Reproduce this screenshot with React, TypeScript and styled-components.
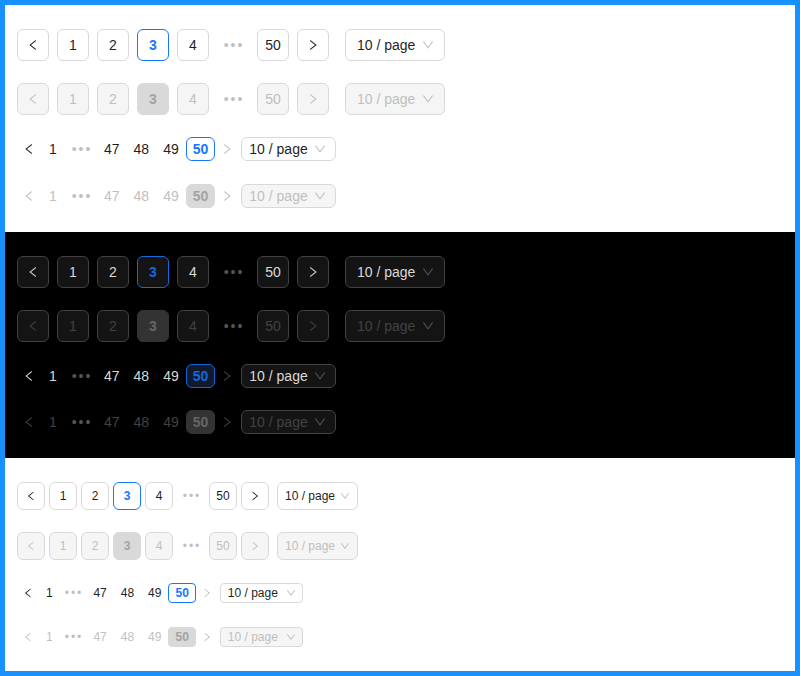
import React from "react";
import styled, { createGlobalStyle } from "styled-components";

type Mode = "light" | "dark";
type SizeKey = "lg" | "sm" | "miniLg" | "miniSm";

interface SizeSpec {
    h: number;
    minW: number;
    gap: number;
    font: number;
    icon: number;
    navW: number;
    ellW: number;
    selW: number;
    selGap: number;
    selPadL: number;
    selPadR: number;
    arrow: number;
    radius: number;
    mini: boolean;
}

const sizes: Record<SizeKey, SizeSpec> = {
    lg: { h: 32, minW: 32, gap: 8, font: 14, icon: 12, navW: 32, ellW: 32, selW: 100, selGap: 16, selPadL: 11, selPadR: 10, arrow: 12, radius: 6, mini: false },
    sm: { h: 28, minW: 28, gap: 4, font: 12, icon: 10, navW: 28, ellW: 28, selW: 81, selGap: 8, selPadL: 7, selPadR: 7, arrow: 10, radius: 6, mini: false },
    miniLg: { h: 24, minW: 24, gap: 0, font: 14, icon: 12, navW: 24, ellW: 32, selW: 95, selGap: 2, selPadL: 7, selPadR: 9, arrow: 12, radius: 6, mini: true },
    miniSm: { h: 20, minW: 20, gap: 0, font: 12, icon: 10, navW: 22, ellW: 26.7, selW: 83, selGap: 2, selPadL: 7, selPadR: 6, arrow: 10, radius: 4, mini: true },
};

const palettes = {
    light: {
        page: "#ffffff",
        text: "#1f1f1f",
        border: "#d9d9d9",
        itemBg: "#ffffff",
        active: "#1677ff",
        activeBg: "#ffffff",
        miniActiveBg: "#ffffff",
        disabledBg: "#f5f5f5",
        disabledText: "#bfbfbf",
        activeDisabledBg: "#d9d9d9",
        activeDisabledText: "#a3a3a3",
        dots: "#bfbfbf",
        arrow: "#bfbfbf",
    },
    dark: {
        page: "#000000",
        text: "#d9d9d9",
        border: "#424242",
        itemBg: "#141414",
        active: "#1668dc",
        activeBg: "#141414",
        miniActiveBg: "#111a2c",
        disabledBg: "#141414",
        disabledText: "#424242",
        activeDisabledBg: "#333333",
        activeDisabledText: "#666666",
        dots: "#555555",
        arrow: "#555555",
    },
};

const paths = {
    left: "M724 218.3V141c0-6.7-7.7-10.4-12.9-6.3L260.3 486.8a31.86 31.86 0 000 50.3l450.8 352.1c5.3 4.1 12.9.4 12.9-6.3v-77.3c0-4.9-2.3-9.6-6.1-12.6l-360-281 360-281.1c3.8-3 6.1-7.7 6.1-12.6z",
    right: "M765.7 486.8L314.9 134.7A7.97 7.97 0 00302 141v77.3c0 4.9 2.3 9.6 6.1 12.6l360 281.1-360 281.1c-3.9 3-6.1 7.7-6.1 12.6V883c0 6.6 7.6 10.3 12.9 6.3l450.8-352.1a31.960 31.96 0 000-50.4z",
    down: "M884 256h-75c-5.1 0-9.9 2.5-12.9 6.6L512 654.2 227.9 262.6c-3-4.1-7.8-6.6-12.9-6.6h-75c-6.5 0-10.3 7.4-6.5 12.7l352.6 486.1c12.8 17.6 39 17.6 51.7 0l352.6-486.1c3.9-5.3.1-12.7-6.4-12.7z",
};

const GlobalStyle = createGlobalStyle`
    html, body {
        margin: 0;
        padding: 0;
        background: #fff;
    }
    body {
        font-family: "Liberation Sans", Arial, sans-serif;
    }
`;

const Frame = styled.div`
    box-sizing: border-box;
    width: 800px;
    height: 676px;
    border: 5px solid #1890ff;
    display: flex;
    flex-direction: column;
`;

const Section = styled.section<{ $m: Mode }>`
    background: ${(p) => palettes[p.$m].page};
    padding: 24px 12px;
    display: flex;
    flex-direction: column;
    align-items: flex-start;
`;

const Row = styled.div<{ $gap: number; $mt: number }>`
    display: flex;
    align-items: center;
    gap: ${(p) => p.$gap}px;
    margin-top: ${(p) => p.$mt}px;
`;

const Item = styled.div<{ $s: SizeSpec; $m: Mode; $active?: boolean; $disabled?: boolean; $w?: number }>`
    box-sizing: border-box;
    display: inline-flex;
    align-items: center;
    justify-content: center;
    height: ${(p) => p.$s.h}px;
    min-width: ${(p) => p.$w ?? p.$s.minW}px;
    padding: ${(p) => (p.$w ? "0" : "0 6px")};
    font-size: ${(p) => p.$s.font}px;
    font-weight: ${(p) => (p.$active ? 700 : 400)};
    border-radius: ${(p) => p.$s.radius}px;
    border: 1px solid
        ${(p) => {
            const c = palettes[p.$m];
            if (p.$active) return p.$disabled ? c.activeDisabledBg : c.active;
            return p.$s.mini ? "transparent" : c.border;
        }};
    background: ${(p) => {
        const c = palettes[p.$m];
        if (p.$active && p.$disabled) return c.activeDisabledBg;
        if (p.$s.mini) return p.$active ? c.miniActiveBg : "transparent";
        return p.$disabled ? c.disabledBg : p.$active ? c.activeBg : c.itemBg;
    }};
    color: ${(p) => {
        const c = palettes[p.$m];
        if (p.$active) return p.$disabled ? c.activeDisabledText : c.active;
        return p.$disabled ? c.disabledText : c.text;
    }};

    svg {
        display: block;
    }
`;

const Dots = styled.div<{ $s: SizeSpec; $m: Mode }>`
    box-sizing: border-box;
    width: ${(p) => p.$s.ellW}px;
    height: ${(p) => p.$s.h}px;
    display: flex;
    align-items: center;
    justify-content: center;
    padding-left: 2px;
    font-size: ${(p) => p.$s.font}px;
    letter-spacing: 2px;
    color: ${(p) => palettes[p.$m].dots};
`;

const SelectBox = styled.div<{ $s: SizeSpec; $m: Mode; $disabled?: boolean }>`
    box-sizing: border-box;
    width: ${(p) => p.$s.selW}px;
    height: ${(p) => p.$s.h}px;
    margin-left: ${(p) => p.$s.selGap - p.$s.gap}px;
    padding: 0 ${(p) => p.$s.selPadR}px 0 ${(p) => p.$s.selPadL}px;
    display: flex;
    align-items: center;
    justify-content: space-between;
    border: 1px solid ${(p) => palettes[p.$m].border};
    border-radius: ${(p) => p.$s.radius}px;
    background: ${(p) => (p.$disabled ? palettes[p.$m].disabledBg : palettes[p.$m].itemBg)};
    color: ${(p) => (p.$disabled ? palettes[p.$m].disabledText : palettes[p.$m].text)};
    font-size: ${(p) => p.$s.font}px;
    white-space: nowrap;
`;

const Arrow = styled.span<{ $m: Mode }>`
    display: flex;
    color: ${(p) => palettes[p.$m].arrow};

    svg {
        display: block;
    }
`;

const Icon = ({ dir, size }: { dir: keyof typeof paths; size: number }) => (
    <svg width={size} height={size} viewBox="64 64 896 896" fill="currentColor" aria-hidden>
        <path d={paths[dir]} />
    </svg>
);

interface PagerProps {
    size: SizeKey;
    mode: Mode;
    disabled?: boolean;
    mt?: number;
}

const SizeSelect = ({ s, mode, disabled }: { s: SizeSpec; mode: Mode; disabled?: boolean }) => (
    <SelectBox $s={s} $m={mode} $disabled={disabled}>
        <span>10 / page</span>
        <Arrow $m={mode}>
            <Icon dir="down" size={s.arrow} />
        </Arrow>
    </SelectBox>
);

const FullPager = ({ size, mode, disabled, mt = 0 }: PagerProps) => {
    const s = sizes[size];
    return (
        <Row $gap={s.gap} $mt={mt}>
            <Item $s={s} $m={mode} $disabled={disabled} $w={s.navW}>
                <Icon dir="left" size={s.icon} />
            </Item>
            {["1", "2", "3", "4"].map((n) => (
                <Item key={n} $s={s} $m={mode} $disabled={disabled} $active={n === "3"}>
                    {n}
                </Item>
            ))}
            <Dots $s={s} $m={mode}>•••</Dots>
            <Item $s={s} $m={mode} $disabled={disabled}>50</Item>
            <Item $s={s} $m={mode} $disabled={disabled} $w={s.navW}>
                <Icon dir="right" size={s.icon} />
            </Item>
            <SizeSelect s={s} mode={mode} disabled={disabled} />
        </Row>
    );
};

const MiniPager = ({ size, mode, disabled, mt = 0 }: PagerProps) => {
    const s = sizes[size];
    return (
        <Row $gap={s.gap} $mt={mt}>
            <Item $s={s} $m={mode} $disabled={disabled} $w={s.navW}>
                <Icon dir="left" size={s.icon} />
            </Item>
            <Item $s={s} $m={mode} $disabled={disabled}>1</Item>
            <Dots $s={s} $m={mode}>•••</Dots>
            {["47", "48", "49", "50"].map((n) => (
                <Item key={n} $s={s} $m={mode} $disabled={disabled} $active={n === "50"}>
                    {n}
                </Item>
            ))}
            <Item $s={s} $m={mode} $disabled $w={s.navW}>
                <Icon dir="right" size={s.icon} />
            </Item>
            <SizeSelect s={s} mode={mode} disabled={disabled} />
        </Row>
    );
};

export default function App() {
    return (
        <>
            <GlobalStyle />
            <Frame>
                <Section $m="light">
                    <FullPager size="lg" mode="light" />
                    <FullPager size="lg" mode="light" disabled mt={22} />
                    <MiniPager size="miniLg" mode="light" mt={22} />
                    <MiniPager size="miniLg" mode="light" disabled mt={23} />
                </Section>
                <Section $m="dark">
                    <FullPager size="lg" mode="dark" />
                    <FullPager size="lg" mode="dark" disabled mt={22} />
                    <MiniPager size="miniLg" mode="dark" mt={22} />
                    <MiniPager size="miniLg" mode="dark" disabled mt={22} />
                </Section>
                <Section $m="light">
                    <FullPager size="sm" mode="light" />
                    <FullPager size="sm" mode="light" disabled mt={22} />
                    <MiniPager size="miniSm" mode="light" mt={23} />
                    <MiniPager size="miniSm" mode="light" disabled mt={24} />
                </Section>
            </Frame>
        </>
    );
}
